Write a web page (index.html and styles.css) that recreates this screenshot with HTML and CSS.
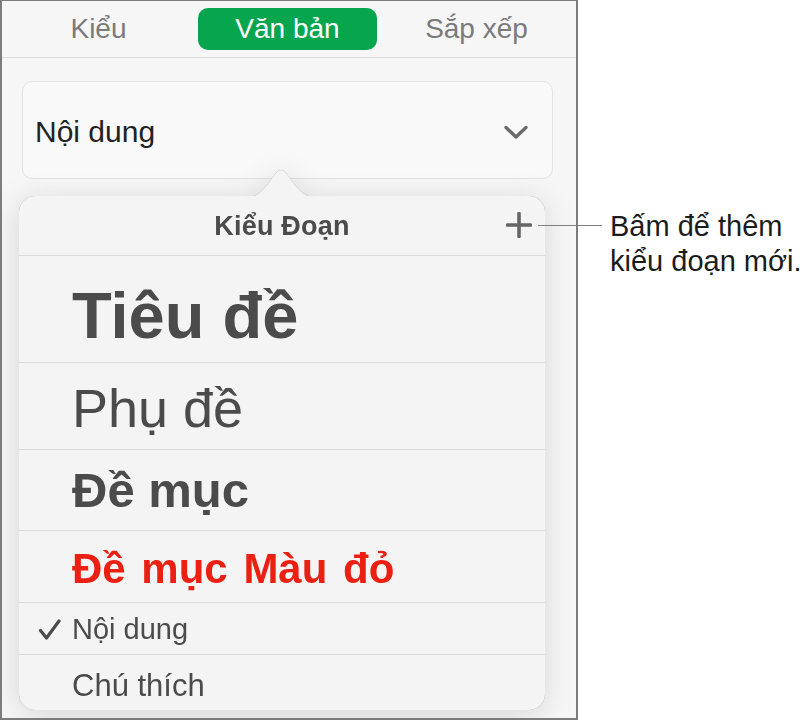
FILE: index.html
```html
<!DOCTYPE html>
<html lang="vi">
<head>
<meta charset="utf-8">
<title>Kiểu Đoạn</title>
<link rel="stylesheet" href="styles.css">
</head>
<body>
<div class="page">
  <div class="panel">
    <div class="tabs">
      <div class="tab">Kiểu</div>
      <div class="tab tab-active">Văn bản</div>
      <div class="tab">Sắp xếp</div>
    </div>
    <div class="select">
      <span class="select-label">Nội dung</span>
      <svg class="chevron" width="26" height="15" viewBox="0 0 26 15"><path d="M3 2.5 L13 12 L23 2.5" fill="none" stroke="#6b6b6b" stroke-width="3.4" stroke-linecap="round" stroke-linejoin="round"/></svg>
    </div>
    <div class="popover">
      <svg class="arrow" width="80" height="30" viewBox="0 0 80 30"><path d="M0 30 C12 30 18 27 26 17 L35 5 Q40 -1 45 5 L54 17 C62 27 68 30 80 30 Z" fill="#f4f4f4"/></svg>
      <div class="card">
        <div class="card-header">
          <span></span>
          <span class="card-title">Kiểu Đoạn</span>
          <svg class="plus" width="26" height="26" viewBox="0 0 26 26"><path d="M13 1.5 V24.5 M1.5 13 H24.5" fill="none" stroke="#666" stroke-width="3.6" stroke-linecap="round"/></svg>
        </div>
        <div class="row row-title">Tiêu đề</div>
        <div class="row row-subtitle">Phụ đề</div>
        <div class="row row-heading">Đề mục</div>
        <div class="row row-red">Đề mục Màu đỏ</div>
        <div class="row row-body row-checked">
          <svg class="check" width="24" height="22" viewBox="0 0 24 22"><path d="M2.5 11.5 L8.5 19 L21 2" fill="none" stroke="#4b4b4b" stroke-width="3.2" stroke-linecap="round" stroke-linejoin="round"/></svg>
          <span>Nội dung</span>
        </div>
        <div class="row row-caption">Chú thích</div>
      </div>
    </div>
  </div>
  <div class="callout">Bấm để thêm<br>kiểu đoạn mới.</div>
</div>
</body>
</html>
```

FILE: styles.css
```css
* { box-sizing: border-box; }

html, body {
  margin: 0;
  padding: 0;
  background: #ffffff;
  font-family: "Liberation Sans", Arial, sans-serif;
}

.page {
  display: flex;
  align-items: flex-start;
  width: 809px;
  height: 721px;
}

.panel {
  width: 578px;
  height: 720px;
  flex: none;
  background: #f6f6f6;
  border: 2px solid #7c7c7c;
  border-top-width: 1px;
  overflow: hidden;
}

.tabs {
  display: flex;
  gap: 10px;
  height: 57px;
  padding: 7px 0 0 7px;
  border-bottom: 1px solid #dedede;
}

.tab {
  width: 179px;
  height: 42px;
  display: flex;
  align-items: center;
  justify-content: center;
  font-size: 28px;
  line-height: 1;
  color: #7b7b7b;
  border-radius: 10px;
}

.tab-active {
  background: #07a64e;
  color: #ffffff;
}

.select {
  margin: 23px 0 0 20px;
  width: 531px;
  height: 98px;
  display: flex;
  align-items: center;
  justify-content: space-between;
  padding: 3px 25px 0 12px;
  background: #f9f9f9;
  border: 1px solid #e3e3e3;
  border-radius: 10px;
}

.select-label {
  font-size: 30px;
  line-height: 1;
  color: #222222;
}

.chevron {
  margin-top: 1px;
  margin-right: -2px;
}

.popover {
  position: relative;
  margin: 17px 0 0 17px;
  width: 526px;
  filter: drop-shadow(0 0 0.6px rgba(0, 0, 0, 0.45)) drop-shadow(0 4px 14px rgba(0, 0, 0, 0.13));
}

.arrow {
  position: absolute;
  left: 222px;
  top: -28px;
  display: block;
}

.card {
  position: relative;
  background: #f4f4f4;
  border-radius: 16px;
  height: 514px;
  overflow: hidden;
}

.card-header {
  height: 59px;
  display: grid;
  grid-template-columns: 1fr auto 1fr;
  align-items: start;
  padding-top: 17px;
}

.card-title {
  font-size: 27px;
  font-weight: bold;
  line-height: 1;
  color: #4b4b4b;
  letter-spacing: 0.2px;
}

.plus {
  justify-self: end;
  margin-right: 13px;
  margin-top: -1px;
}

.row {
  border-top: 1px solid #dcdcdc;
  padding-left: 53px;
  line-height: 1;
  color: #4b4b4b;
  white-space: nowrap;
}

.row-title {
  height: 107px;
  padding-top: 27px;
  font-size: 65px;
  font-weight: bold;
}

.row-subtitle {
  height: 87px;
  padding-top: 18px;
  font-size: 54px;
}

.row-heading {
  height: 81px;
  padding-top: 16px;
  font-size: 49px;
  font-weight: bold;
}

.row-red {
  height: 72px;
  padding-top: 17px;
  font-size: 42px;
  font-weight: bold;
  color: #ec2012;
  word-spacing: 4px;
}

.row-body {
  height: 52px;
  padding-top: 12px;
  font-size: 29px;
}

.row-checked {
  display: flex;
  align-items: flex-start;
  padding-left: 19px;
}

.check {
  margin: 4px 10px 0 0;
  flex: none;
}

.row-caption {
  height: 56px;
  padding-top: 15px;
  font-size: 31px;
}

.callout {
  position: relative;
  margin-left: 32px;
  padding-top: 209px;
  font-size: 29px;
  line-height: 35px;
  color: #1c1c1c;
  white-space: nowrap;
}

.callout::before {
  content: "";
  position: absolute;
  left: -72px;
  top: 225px;
  width: 64px;
  height: 1px;
  background: #808080;
}
```
